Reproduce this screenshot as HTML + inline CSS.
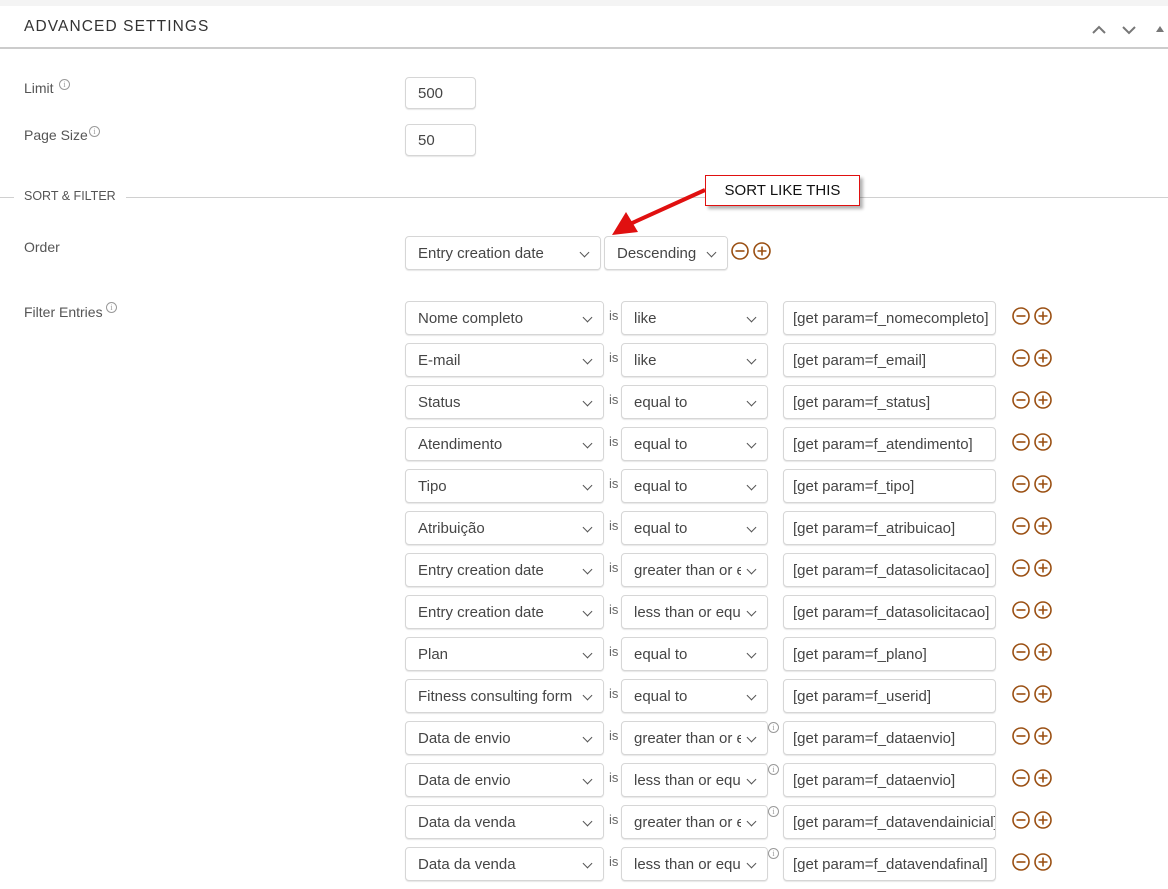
<!DOCTYPE html>
<html><head><meta charset="utf-8"><style>
*{box-sizing:border-box;margin:0;padding:0}
body{width:1168px;height:889px;overflow:hidden;background:#fff;font-family:"Liberation Sans",sans-serif;color:#444;position:relative}
.a{position:absolute}
.lbl{font-size:14px;color:#555}
.box{position:absolute;height:34px;border:1px solid #d6d6d6;border-radius:4px;box-shadow:0 1px 1px rgba(0,0,0,.1);background:#fff;font-size:15px;color:#454545;padding-left:12px;line-height:34px;white-space:nowrap;overflow:hidden}
.sel::before{content:"";position:absolute;right:0;top:0;width:26px;height:100%;background:#fff}
.sel::after{content:"";position:absolute;right:12px;top:12px;width:6px;height:6px;border-right:1.6px solid #555;border-bottom:1.6px solid #555;transform:rotate(45deg)}
.is{position:absolute;font-size:13px;color:#666}
.info{position:absolute;width:11px;height:11px;border:1px solid #999;border-radius:50%;font-size:8px;line-height:9px;text-align:center;color:#999;font-family:"Liberation Serif",serif}
.ic{position:absolute;width:18px;height:18px}
</style></head><body>
<div class="a" style="left:0;top:0;width:1168px;height:6px;background:#f4f4f4"></div>
<div class="a" style="left:24px;top:18px;font-size:15.5px;letter-spacing:1.1px;color:#333">ADVANCED SETTINGS</div>
<div class="a" style="left:0;top:47px;width:1168px;height:2px;background:#ccc"></div>
<svg class="a" style="left:1090px;top:22px" width="78" height="16"><path d="M3 11 L9 5 L15 11" stroke="#777" stroke-width="2" fill="none"/><path d="M33 5 L39 11 L45 5" stroke="#777" stroke-width="2" fill="none"/><path d="M66 10 L70 4 L74 10Z" fill="#777"/></svg>

<div class="a lbl" style="left:24px;top:80px">Limit</div><div class="info" style="left:59px;top:79px">i</div>
<div class="box" style="left:405px;top:77px;width:71px;height:32px;line-height:32px">500</div>
<div class="a lbl" style="left:24px;top:127px">Page Size</div><div class="info" style="left:89px;top:126px">i</div>
<div class="box" style="left:405px;top:124px;width:71px;height:32px;line-height:32px">50</div>

<div class="a" style="left:0;top:197px;width:14px;height:1px;background:#d0d0d0"></div>
<div class="a" style="left:24px;top:189px;font-size:12.5px;color:#555">SORT &amp; FILTER</div>
<div class="a" style="left:126px;top:197px;width:1042px;height:1px;background:#d0d0d0"></div>

<div class="a lbl" style="left:24px;top:239px">Order</div>
<div class="box sel" style="left:405px;top:236px;width:196px">Entry creation date</div>
<div class="box sel" style="left:604px;top:236px;width:124px">Descending</div>
<svg class="ic" style="left:731px;top:242px" viewBox="0 0 18 18"><circle cx="9" cy="9" r="8" stroke="#9a4f12" stroke-width="1.6" fill="none"/><path d="M4.5 9H13.5" stroke="#9a4f12" stroke-width="1.6"/></svg>
<svg class="ic" style="left:753px;top:242px" viewBox="0 0 18 18"><circle cx="9" cy="9" r="8" stroke="#9a4f12" stroke-width="1.6" fill="none"/><path d="M4.5 9H13.5M9 4.5V13.5" stroke="#9a4f12" stroke-width="1.6"/></svg>

<div class="a" style="left:705px;top:175px;width:155px;height:31px;border:1px solid #e01010;background:#fff;box-shadow:3px 3px 3px rgba(0,0,0,.3);font-size:15px;color:#111;text-align:center;line-height:29px">SORT LIKE THIS</div>
<svg class="a" style="left:600px;top:180px" width="110" height="60"><path d="M105 10 L30 44" stroke="#e01010" stroke-width="4"/><path d="M12 55 L26 32 L38 52Z" fill="#e01010"/></svg>

<div class="a lbl" style="left:24px;top:304px">Filter Entries</div><div class="info" style="left:106px;top:302px">i</div>

<div class="box sel" style="left:405px;top:301px;width:199px">Nome completo</div><div class="is" style="left:609px;top:308px">is</div><div class="box sel" style="left:621px;top:301px;width:147px">like</div><div class="box" style="left:783px;top:301px;width:213px;padding-left:9px">[get param=f_nomecompleto]</div>
<div class="box sel" style="left:405px;top:343px;width:199px">E-mail</div><div class="is" style="left:609px;top:350px">is</div><div class="box sel" style="left:621px;top:343px;width:147px">like</div><div class="box" style="left:783px;top:343px;width:213px;padding-left:9px">[get param=f_email]</div>
<div class="box sel" style="left:405px;top:385px;width:199px">Status</div><div class="is" style="left:609px;top:392px">is</div><div class="box sel" style="left:621px;top:385px;width:147px">equal to</div><div class="box" style="left:783px;top:385px;width:213px;padding-left:9px">[get param=f_status]</div>
<div class="box sel" style="left:405px;top:427px;width:199px">Atendimento</div><div class="is" style="left:609px;top:434px">is</div><div class="box sel" style="left:621px;top:427px;width:147px">equal to</div><div class="box" style="left:783px;top:427px;width:213px;padding-left:9px">[get param=f_atendimento]</div>
<div class="box sel" style="left:405px;top:469px;width:199px">Tipo</div><div class="is" style="left:609px;top:476px">is</div><div class="box sel" style="left:621px;top:469px;width:147px">equal to</div><div class="box" style="left:783px;top:469px;width:213px;padding-left:9px">[get param=f_tipo]</div>
<div class="box sel" style="left:405px;top:511px;width:199px">Atribuição</div><div class="is" style="left:609px;top:518px">is</div><div class="box sel" style="left:621px;top:511px;width:147px">equal to</div><div class="box" style="left:783px;top:511px;width:213px;padding-left:9px">[get param=f_atribuicao]</div>
<div class="box sel" style="left:405px;top:553px;width:199px">Entry creation date</div><div class="is" style="left:609px;top:560px">is</div><div class="box sel" style="left:621px;top:553px;width:147px">greater than or equal to</div><div class="box" style="left:783px;top:553px;width:213px;padding-left:9px">[get param=f_datasolicitacao]</div>
<div class="box sel" style="left:405px;top:595px;width:199px">Entry creation date</div><div class="is" style="left:609px;top:602px">is</div><div class="box sel" style="left:621px;top:595px;width:147px">less than or equal to</div><div class="box" style="left:783px;top:595px;width:213px;padding-left:9px">[get param=f_datasolicitacao]</div>
<div class="box sel" style="left:405px;top:637px;width:199px">Plan</div><div class="is" style="left:609px;top:644px">is</div><div class="box sel" style="left:621px;top:637px;width:147px">equal to</div><div class="box" style="left:783px;top:637px;width:213px;padding-left:9px">[get param=f_plano]</div>
<div class="box sel" style="left:405px;top:679px;width:199px">Fitness consulting form</div><div class="is" style="left:609px;top:686px">is</div><div class="box sel" style="left:621px;top:679px;width:147px">equal to</div><div class="box" style="left:783px;top:679px;width:213px;padding-left:9px">[get param=f_userid]</div>
<div class="box sel" style="left:405px;top:721px;width:199px">Data de envio</div><div class="is" style="left:609px;top:728px">is</div><div class="box sel" style="left:621px;top:721px;width:147px">greater than or equal to</div><div class="box" style="left:783px;top:721px;width:213px;padding-left:9px">[get param=f_dataenvio]</div>
<div class="box sel" style="left:405px;top:763px;width:199px">Data de envio</div><div class="is" style="left:609px;top:770px">is</div><div class="box sel" style="left:621px;top:763px;width:147px">less than or equal to</div><div class="box" style="left:783px;top:763px;width:213px;padding-left:9px">[get param=f_dataenvio]</div>
<div class="box sel" style="left:405px;top:805px;width:199px">Data da venda</div><div class="is" style="left:609px;top:812px">is</div><div class="box sel" style="left:621px;top:805px;width:147px">greater than or equal to</div><div class="box" style="left:783px;top:805px;width:213px;padding-left:9px">[get param=f_datavendainicial]</div>
<div class="box sel" style="left:405px;top:847px;width:199px">Data da venda</div><div class="is" style="left:609px;top:854px">is</div><div class="box sel" style="left:621px;top:847px;width:147px">less than or equal to</div><div class="box" style="left:783px;top:847px;width:213px;padding-left:9px">[get param=f_datavendafinal]</div>

<div class="info" style="left:768px;top:722px">i</div>
<div class="info" style="left:768px;top:764px">i</div>
<div class="info" style="left:768px;top:806px">i</div>
<div class="info" style="left:768px;top:848px">i</div>

<svg class="a" style="left:1012px;top:307px" width="42" height="580">
<defs><g id="m"><circle cx="9" cy="9" r="8" stroke="#9a4f12" stroke-width="1.6" fill="none"/><path d="M4.5 9H13.5" stroke="#9a4f12" stroke-width="1.6"/></g><g id="p"><circle cx="9" cy="9" r="8" stroke="#9a4f12" stroke-width="1.6" fill="none"/><path d="M4.5 9H13.5M9 4.5V13.5" stroke="#9a4f12" stroke-width="1.6"/></g></defs>
<use href="#m" x="0" y="0"/><use href="#p" x="22" y="0"/>
<use href="#m" x="0" y="42"/><use href="#p" x="22" y="42"/>
<use href="#m" x="0" y="84"/><use href="#p" x="22" y="84"/>
<use href="#m" x="0" y="126"/><use href="#p" x="22" y="126"/>
<use href="#m" x="0" y="168"/><use href="#p" x="22" y="168"/>
<use href="#m" x="0" y="210"/><use href="#p" x="22" y="210"/>
<use href="#m" x="0" y="252"/><use href="#p" x="22" y="252"/>
<use href="#m" x="0" y="294"/><use href="#p" x="22" y="294"/>
<use href="#m" x="0" y="336"/><use href="#p" x="22" y="336"/>
<use href="#m" x="0" y="378"/><use href="#p" x="22" y="378"/>
<use href="#m" x="0" y="420"/><use href="#p" x="22" y="420"/>
<use href="#m" x="0" y="462"/><use href="#p" x="22" y="462"/>
<use href="#m" x="0" y="504"/><use href="#p" x="22" y="504"/>
<use href="#m" x="0" y="546"/><use href="#p" x="22" y="546"/>
</svg>
</body></html>
